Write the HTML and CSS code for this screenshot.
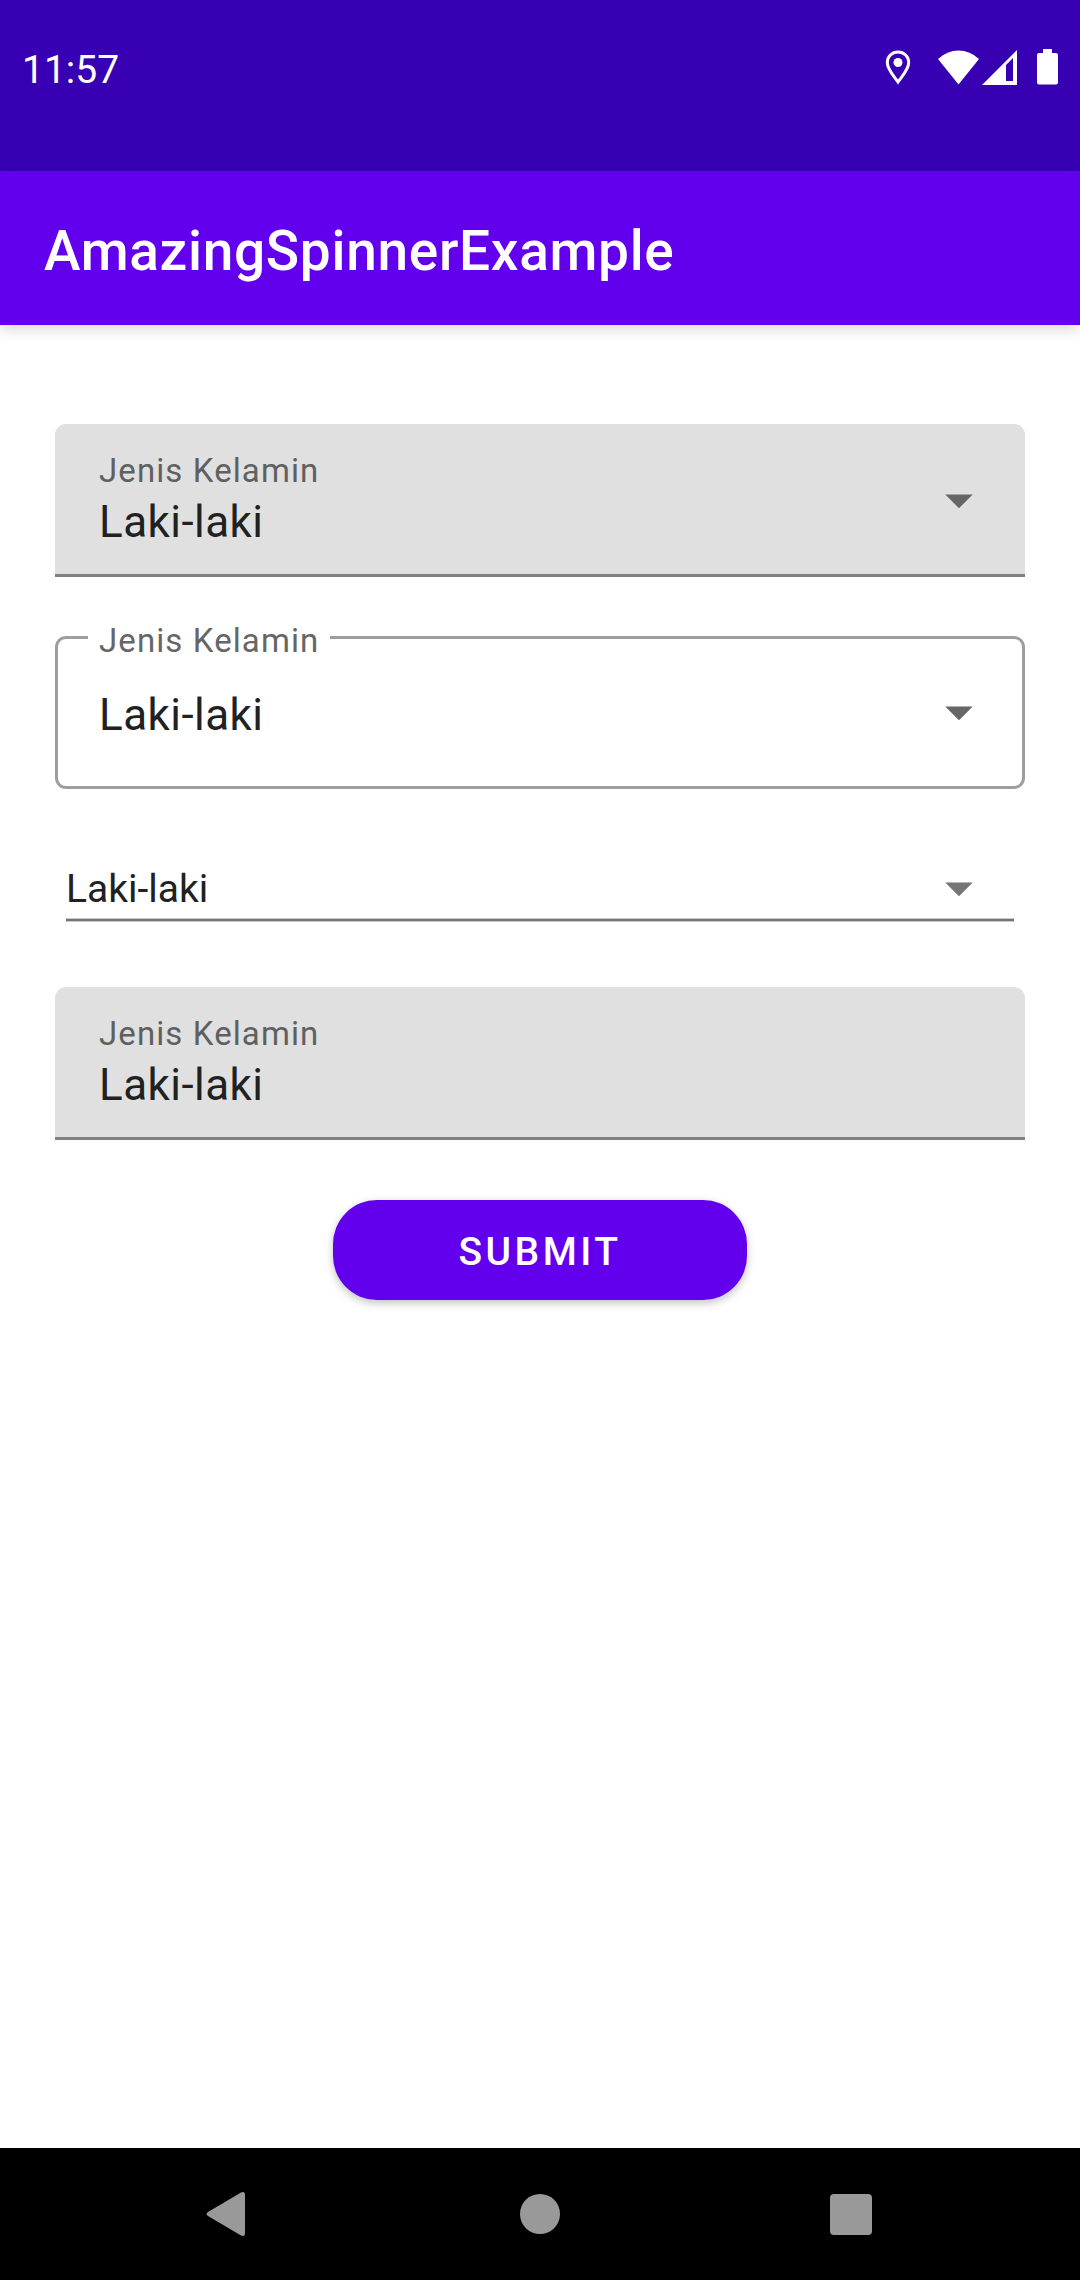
FILE: index.html
```html
<!DOCTYPE html>
<html lang="id">
<head>
<meta charset="utf-8">
<meta name="viewport" content="width=device-width, initial-scale=1">
<title>AmazingSpinnerExample</title>
<link rel="stylesheet" href="styles.css">
</head>
<body>
<div class="status-bar">
  <time class="clock">11:57</time>
  <div class="status-icons">
    <svg width="26" height="36" viewBox="0 0 26 36" aria-hidden="true"><path d="M13 3C7 3 2.300 7.500 2.300 13.500C2.300 20.500 8.500 26.500 13 33C17.500 26.500 23.700 20.500 23.700 13.500C23.700 7.500 19 3 13 3Z" fill="none" stroke="#fff" stroke-width="3"/><circle cx="13" cy="13.500" r="4.500" fill="#fff"/></svg>
    <svg class="wifi" width="42" height="36" viewBox="0 0 42 36" aria-hidden="true"><path d="M0 10Q9 1.500 20.500 1.500T41 10L20.500 35.500Z" fill="#fff"/></svg>
    <svg class="signal" width="36" height="36" viewBox="0 0 36 36" aria-hidden="true"><path fill-rule="evenodd" d="M0 36L35 1V36ZM24 16V32H31V9Z" fill="#fff"/></svg>
    <svg class="battery" width="21" height="36" viewBox="0 0 21 36" aria-hidden="true"><path d="M6 0H15V4H19Q21 4 21 6V33.500Q21 35.500 19 35.500H2Q0 35.500 0 33.500V6Q0 4 2 4H6Z" fill="#fff"/></svg>
  </div>
</div>
<header class="app-bar"><h1 class="app-title">AmazingSpinnerExample</h1></header>
<main class="content">
  <form class="form">
    <div class="field filled">
      <select class="control" id="gender-filled"><option>Laki-laki</option><option>Perempuan</option></select>
      <label class="label" for="gender-filled">Jenis Kelamin</label>
      <svg class="arrow" viewBox="0 0 24 24" aria-hidden="true"><path d="M7 10l5 5 5-5z"/></svg>
    </div>
    <div class="field outlined">
      <select class="control" id="gender-outlined"><option>Laki-laki</option><option>Perempuan</option></select>
      <label class="label" for="gender-outlined">Jenis Kelamin</label>
      <svg class="arrow" viewBox="0 0 24 24" aria-hidden="true"><path d="M7 10l5 5 5-5z"/></svg>
    </div>
    <div class="field plain">
      <select class="control" aria-label="Jenis Kelamin"><option>Laki-laki</option><option>Perempuan</option></select>
      <svg class="arrow" viewBox="0 0 24 24" aria-hidden="true"><path d="M7 10l5 5 5-5z"/></svg>
    </div>
    <div class="field filled">
      <input class="control" id="gender-text" type="text" value="Laki-laki">
      <label class="label" for="gender-text">Jenis Kelamin</label>
    </div>
    <button class="submit" type="button">SUBMIT</button>
  </form>
</main>
<nav class="nav-bar">
  <button class="nav-button" type="button" aria-label="Back"><svg width="46" height="46" viewBox="0 0 46 46"><path d="M2 21L35 1.500Q39 0 39 4V42Q39 46 35 44.500L2 25Q-1 23 2 21Z"/></svg></button>
  <button class="nav-button" type="button" aria-label="Home"><svg width="46" height="46" viewBox="0 0 46 46"><circle cx="23" cy="23" r="20"/></svg></button>
  <button class="nav-button" type="button" aria-label="Recent apps"><svg width="46" height="46" viewBox="0 0 46 46"><rect x="2" y="3" width="42" height="41" rx="4"/></svg></button>
</nav>
</body>
</html>
```
FILE: styles.css
```css
* {
  box-sizing: border-box;
}

body {
  margin: 0;
  min-height: 100vh;
  display: flex;
  flex-direction: column;
  background: #fff;
  color: #212121;
  font-family: Roboto, "Noto Sans", sans-serif;
}

button,
input,
select {
  font-family: inherit;
}

svg {
  display: block;
}

.status-bar {
  display: flex;
  justify-content: space-between;
  align-items: flex-start;
  padding: 49px 22px 80px;
  background: #3700b3;
  color: #fff;
}

.clock {
  font-size: 39px;
  line-height: 42px;
}

.status-icons {
  display: flex;
}

.wifi {
  margin-left: 27px;
}

.signal {
  margin-left: 2px;
}

.battery {
  margin-left: 19px;
}

.app-bar {
  padding: 48px 44px 42px;
  background: #6200ee;
  color: #fff;
  box-shadow: 0 4px 14px rgba(0, 0, 0, 0.16);
}

.app-title {
  margin: 0;
  font-size: 55px;
  line-height: 64px;
  font-weight: 500;
  letter-spacing: 0.0125em;
}

.content {
  flex: 1;
  padding: 99px 55px;
}

.form {
  display: flex;
  flex-direction: column;
}

/* The control, its label and its arrow share one grid cell. */
.field {
  display: grid;
}

.field > * {
  grid-area: 1 / 1;
}

.control {
  width: 100%;
  height: 153px;
  margin: 0;
  border: 0;
  border-radius: 0;
  outline: 0;
  background: none;
  color: #212121;
  font-size: 44px;
  letter-spacing: 0.01em;
  appearance: none;
}

.label {
  justify-self: start;
  align-self: start;
  margin: 27px 0 0 44px;
  color: #606060;
  font-size: 33px;
  line-height: 40px;
  letter-spacing: 0.0333em;
}

.arrow {
  width: 66px;
  height: 66px;
  justify-self: end;
  align-self: center;
  margin: 0 33px 2px 0;
  fill: #666;
  pointer-events: none;
}

.filled .control {
  padding: 46px 44px 0;
  border-bottom: 3px solid #808080;
  border-radius: 11px 11px 0 0;
  background: #e0e0e0;
}

.outlined {
  margin-top: 59px;
}

.outlined .control {
  padding: 5px 41px 0;
  border: 3px solid #9e9e9e;
  border-radius: 11px;
}

.outlined .label {
  margin: -15px 0 0 33px;
  padding: 0 11px;
  background: #fff;
  color: #666;
}

.plain {
  margin: 66px 11px;
}

.plain .control {
  height: 66px;
  padding: 3px 0 0;
  border-bottom: 2px solid #757575;
  box-shadow: 0 1px #c8c8c8, inset 0 -1px #c8c8c8;
  font-size: 39px;
  letter-spacing: normal;
}

.plain .arrow {
  margin: 0 22px 0 0;
  fill: #757575;
}

.submit {
  align-self: center;
  width: 414px;
  height: 100px;
  margin-top: 60px;
  padding: 3px 0 0;
  border: 0;
  border-radius: 44px;
  background: #6200ee;
  box-shadow: 0 3px 8px rgba(0, 0, 0, 0.25);
  color: #fff;
  font-size: 39px;
  font-weight: 500;
  letter-spacing: 0.0893em;
}

.nav-bar {
  display: grid;
  grid-template-columns: repeat(3, 1fr);
  padding: 0 74px;
  background: #000;
}

.nav-button {
  display: flex;
  justify-content: center;
  padding: 43px 0;
  border: 0;
  background: none;
  fill: #999;
}
```
